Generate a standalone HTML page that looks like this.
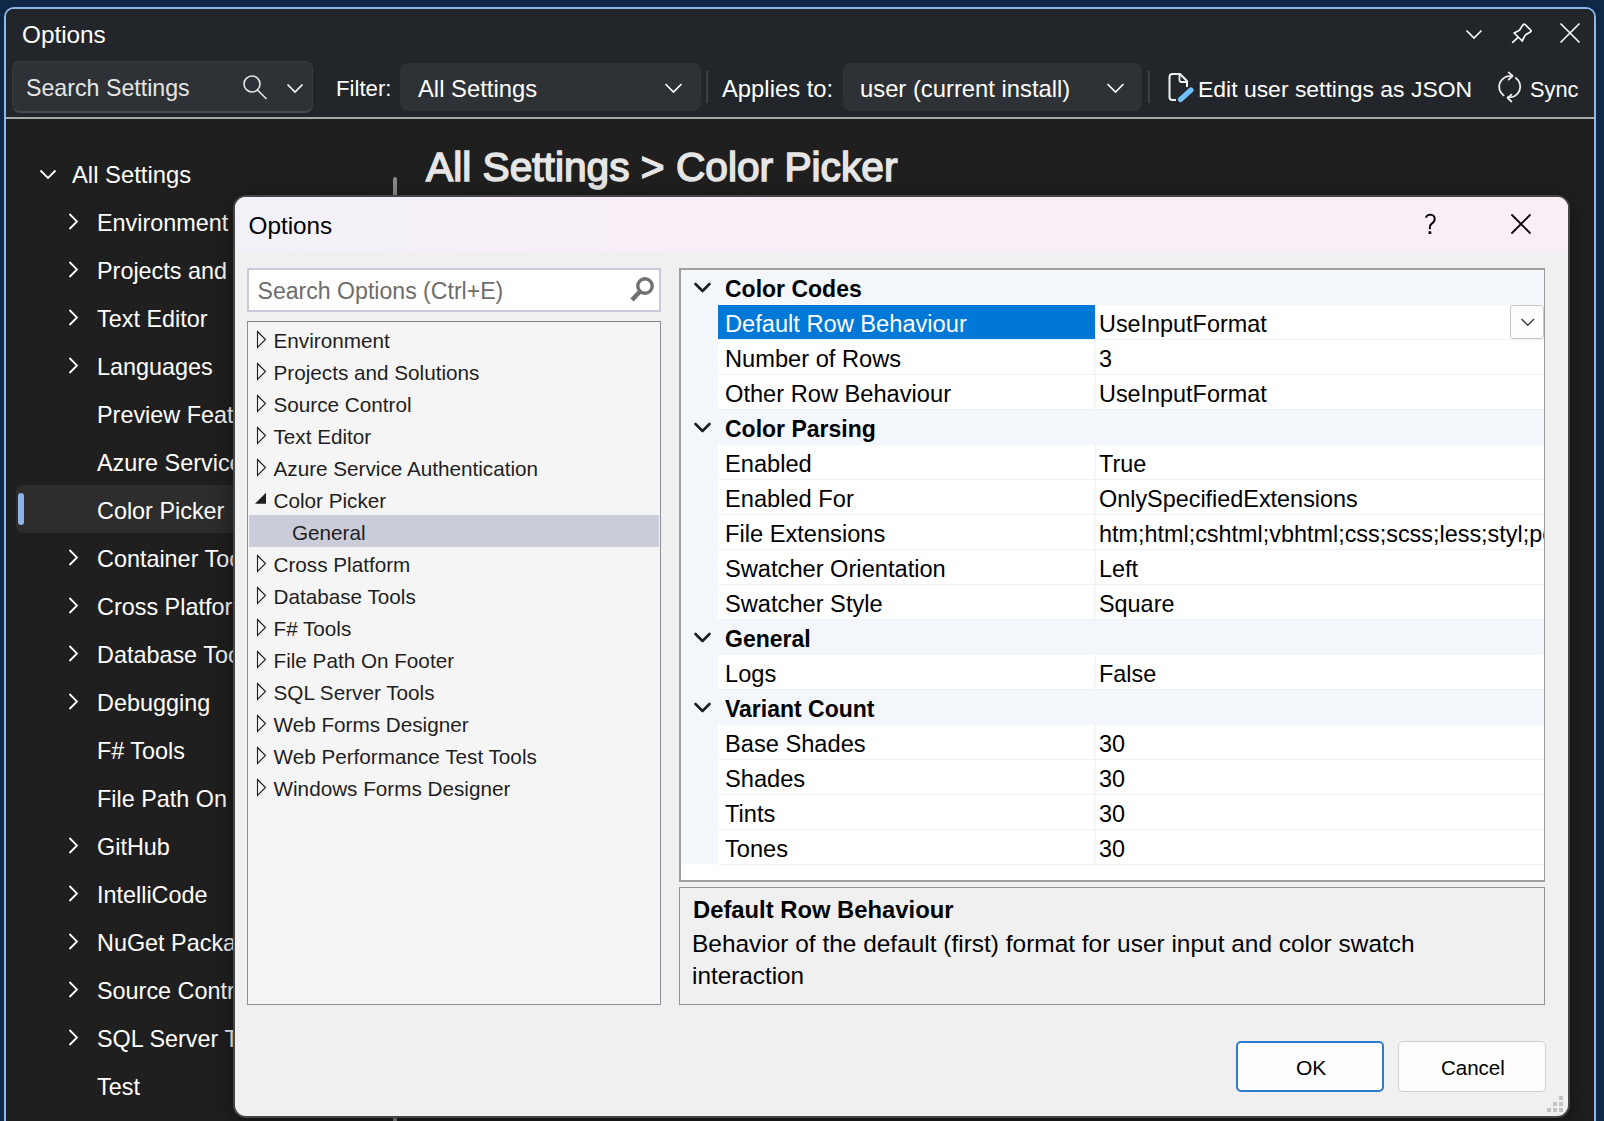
<!DOCTYPE html><html><head><meta charset='utf-8'><style>
html,body{margin:0;padding:0;}
body{width:1604px;height:1121px;overflow:hidden;position:relative;background:#0f2847;font-family:"Liberation Sans",sans-serif;}
.t{position:absolute;white-space:nowrap;}
.r{position:absolute;box-sizing:border-box;}
svg{position:absolute;overflow:visible;}
</style></head><body>
<div class='r' style='left:4px;top:7px;width:1592px;height:1133px;background:#1f1f1f;border:2px solid #8db9ed;border-radius:10px;'></div>
<div class='r' style='left:6px;top:9px;width:1588px;height:108px;background:#22262a;border-radius:8px 8px 0 0;'></div>
<div class='r' style='left:6px;top:117px;width:1588px;height:2px;background:#a9a9a9;'></div>
<div class='t' style='left:22px;top:23.23px;font-size:24.3px;line-height:24.3px;color:#ffffff;'>Options</div>
<svg style='left:0;top:0' width='1604' height='60'><polyline points='1466.5,30.5 1474,38 1481.5,30.5' fill='none' stroke='#fff' stroke-width='1.6'/><line x1='1560.5' y1='23.5' x2='1579.5' y2='42.5' stroke='#fff' stroke-width='1.6'/><line x1='1579.5' y1='23.5' x2='1560.5' y2='42.5' stroke='#fff' stroke-width='1.6'/><path d='M1523.2,24.6 Q1524.2,23.7 1525.2,24.6 L1530.6,30 Q1531.6,31.2 1530.4,32 L1526,34.6 Q1524.9,35.3 1524.5,36.4 L1522.2,41 L1514.1,33 L1518.6,30.8 Q1519.7,30.3 1520.1,29.2 Z' fill='none' stroke='#fff' stroke-width='1.7' stroke-linejoin='round'/><line x1='1517.8' y1='37.6' x2='1512.6' y2='42.3' stroke='#fff' stroke-width='1.7' stroke-linecap='round'/></svg>
<div class='r' style='left:12px;top:61px;width:301px;height:52px;background:#2e3236;border:1px solid #383b40;border-bottom:2px solid #46494e;border-radius:8px;'></div>
<div class='t' style='left:26px;top:77.36px;font-size:23.2px;line-height:23.2px;color:#e6e6e6;'>Search Settings</div>
<div class='t' style='left:336px;top:78.20px;font-size:22.2px;line-height:22.2px;color:#ffffff;'>Filter:</div>
<div class='r' style='left:400px;top:63px;width:301px;height:48px;background:#2e3236;border-radius:8px;'></div>
<div class='t' style='left:418px;top:76.85px;font-size:23.8px;line-height:23.8px;color:#ffffff;'>All Settings</div>
<div class='t' style='left:722px;top:76.85px;font-size:23.8px;line-height:23.8px;color:#ffffff;'>Applies to:</div>
<div class='r' style='left:843px;top:63px;width:299px;height:48px;background:#2e3236;border-radius:8px;'></div>
<div class='t' style='left:860px;top:76.85px;font-size:23.8px;line-height:23.8px;color:#ffffff;'>user (current install)</div>
<div class='t' style='left:1198px;top:77.57px;font-size:22.95px;line-height:22.95px;color:#ffffff;'>Edit user settings as JSON</div>
<div class='t' style='left:1530px;top:78.54px;font-size:21.8px;line-height:21.8px;color:#ffffff;'>Sync</div>
<svg style='left:0;top:0' width='1604' height='120'><circle cx='252' cy='84' r='8' fill='none' stroke='#e6e6e6' stroke-width='1.6'/><line x1='257.5' y1='90' x2='266.5' y2='99' stroke='#e6e6e6' stroke-width='1.6'/><polyline points='287.5,84.5 295,92 302.5,84.5' fill='none' stroke='#fff' stroke-width='1.6'/><polyline points='665.5,84 673.5,92 681.5,84' fill='none' stroke='#fff' stroke-width='1.6'/><polyline points='1107.5,84 1115.5,92 1123.5,84' fill='none' stroke='#fff' stroke-width='1.6'/><line x1='707' y1='71' x2='707' y2='103' stroke='#3d4045' stroke-width='2'/><line x1='1149' y1='71' x2='1149' y2='103' stroke='#3d4045' stroke-width='2'/><path d='M1176,100 L1172.5,100 Q1169.5,100 1169.5,97 L1169.5,77 Q1169.5,74 1172.5,74 L1180,74 L1187,81 L1187,87' fill='none' stroke='#f0f0f0' stroke-width='2' stroke-linejoin='round'/><path d='M1179.5,74.5 L1179.5,80 Q1179.5,82 1181.5,82 L1187,82' fill='none' stroke='#f0f0f0' stroke-width='1.8'/><line x1='1180.5' y1='99.5' x2='1191' y2='90' stroke='#22262a' stroke-width='8.5' stroke-linecap='round'/><line x1='1180.5' y1='99.5' x2='1191' y2='90' stroke='#70c0fb' stroke-width='5.2' stroke-linecap='round'/><path d='M1511.5,76.3 A10.6,10.6 0 0 0 1503.6,95.4' fill='none' stroke='#ececec' stroke-width='1.8' stroke-linecap='round'/><path d='M1515.8,78 A10.6,10.6 0 0 1 1507.9,97.1' fill='none' stroke='#ececec' stroke-width='1.8' stroke-linecap='round'/><polyline points='1508.6,72.4 1512.6,76 1508.6,79.6' fill='none' stroke='#ececec' stroke-width='1.8' stroke-linecap='round' stroke-linejoin='round'/><polyline points='1511.4,94.6 1507.6,98 1511.4,101.5' fill='none' stroke='#ececec' stroke-width='1.8' stroke-linecap='round' stroke-linejoin='round'/></svg>
<svg style='left:0;top:0' width='420' height='1121'><polyline points='40.5,170.5 48,178 55.5,170.5' fill='none' stroke='#fff' stroke-width='1.8'/><polyline points='69.5,214 77,221.5 69.5,229' fill='none' stroke='#fff' stroke-width='1.8'/><polyline points='69.5,262 77,269.5 69.5,277' fill='none' stroke='#fff' stroke-width='1.8'/><polyline points='69.5,310 77,317.5 69.5,325' fill='none' stroke='#fff' stroke-width='1.8'/><polyline points='69.5,358 77,365.5 69.5,373' fill='none' stroke='#fff' stroke-width='1.8'/><polyline points='69.5,550 77,557.5 69.5,565' fill='none' stroke='#fff' stroke-width='1.8'/><polyline points='69.5,598 77,605.5 69.5,613' fill='none' stroke='#fff' stroke-width='1.8'/><polyline points='69.5,646 77,653.5 69.5,661' fill='none' stroke='#fff' stroke-width='1.8'/><polyline points='69.5,694 77,701.5 69.5,709' fill='none' stroke='#fff' stroke-width='1.8'/><polyline points='69.5,838 77,845.5 69.5,853' fill='none' stroke='#fff' stroke-width='1.8'/><polyline points='69.5,886 77,893.5 69.5,901' fill='none' stroke='#fff' stroke-width='1.8'/><polyline points='69.5,934 77,941.5 69.5,949' fill='none' stroke='#fff' stroke-width='1.8'/><polyline points='69.5,982 77,989.5 69.5,997' fill='none' stroke='#fff' stroke-width='1.8'/><polyline points='69.5,1030 77,1037.5 69.5,1045' fill='none' stroke='#fff' stroke-width='1.8'/></svg>
<div class='r' style='left:16px;top:485px;width:384px;height:48px;background:#2d2d2d;border-radius:7px;'></div>
<div class='r' style='left:18px;top:493px;width:6px;height:32px;background:#8ab5ea;border-radius:3px;'></div>
<div class='t' style='left:72px;top:162.85px;font-size:23.8px;line-height:23.8px;color:#ffffff;'>All Settings</div>
<div class='t' style='left:97px;top:212.19px;font-size:23.4px;line-height:23.4px;color:#ffffff;'>Environment</div>
<div class='t' style='left:97px;top:260.19px;font-size:23.4px;line-height:23.4px;color:#ffffff;'>Projects and Solutions</div>
<div class='t' style='left:97px;top:308.19px;font-size:23.4px;line-height:23.4px;color:#ffffff;'>Text Editor</div>
<div class='t' style='left:97px;top:356.19px;font-size:23.4px;line-height:23.4px;color:#ffffff;'>Languages</div>
<div class='t' style='left:97px;top:404.19px;font-size:23.4px;line-height:23.4px;color:#ffffff;'>Preview Features</div>
<div class='t' style='left:97px;top:452.19px;font-size:23.4px;line-height:23.4px;color:#ffffff;'>Azure Service Authentication</div>
<div class='t' style='left:97px;top:500.19px;font-size:23.4px;line-height:23.4px;color:#ffffff;'>Color Picker</div>
<div class='t' style='left:97px;top:548.19px;font-size:23.4px;line-height:23.4px;color:#ffffff;'>Container Tools</div>
<div class='t' style='left:97px;top:596.19px;font-size:23.4px;line-height:23.4px;color:#ffffff;'>Cross Platform</div>
<div class='t' style='left:97px;top:644.19px;font-size:23.4px;line-height:23.4px;color:#ffffff;'>Database Tools</div>
<div class='t' style='left:97px;top:692.19px;font-size:23.4px;line-height:23.4px;color:#ffffff;'>Debugging</div>
<div class='t' style='left:97px;top:740.19px;font-size:23.4px;line-height:23.4px;color:#ffffff;'>F# Tools</div>
<div class='t' style='left:97px;top:788.19px;font-size:23.4px;line-height:23.4px;color:#ffffff;'>File Path On Footer</div>
<div class='t' style='left:97px;top:836.19px;font-size:23.4px;line-height:23.4px;color:#ffffff;'>GitHub</div>
<div class='t' style='left:97px;top:884.19px;font-size:23.4px;line-height:23.4px;color:#ffffff;'>IntelliCode</div>
<div class='t' style='left:97px;top:932.19px;font-size:23.4px;line-height:23.4px;color:#ffffff;'>NuGet Package Manager</div>
<div class='t' style='left:97px;top:980.19px;font-size:23.4px;line-height:23.4px;color:#ffffff;'>Source Control</div>
<div class='t' style='left:97px;top:1028.19px;font-size:23.4px;line-height:23.4px;color:#ffffff;'>SQL Server Tools</div>
<div class='t' style='left:97px;top:1076.19px;font-size:23.4px;line-height:23.4px;color:#ffffff;'>Test</div>
<div class='r' style='left:393px;top:177px;width:4px;height:963px;background:#8a8a8a;border-radius:2px;'></div>
<div class='t' style='left:426px;top:146.74px;font-size:40.7px;line-height:40.7px;color:#e6e6e6;-webkit-text-stroke:1.5px #e6e6e6;'>All Settings &gt; Color Picker</div>
<div class='r' style='left:233px;top:195px;width:1337px;height:923px;background:#f0f0f0;border:2px solid #454545;border-radius:13px;box-shadow:0 6px 24px rgba(0,0,0,0.45);overflow:hidden;'></div>
<div class='r' style='left:235px;top:197px;width:1333px;height:56px;background:linear-gradient(90deg,#f2f1f8 0%,#f6eff7 22%,#f9edf6 42%,#f9edf6 100%);border-radius:11px 11px 0 0;'></div>
<div class='t' style='left:248.5px;top:213.93px;font-size:24.3px;line-height:24.3px;color:#000000;'>Options</div>
<svg style='left:0;top:0' width='1604' height='1121'><path d='M1425.8,217.6 Q1427,214.6 1430.3,214.6 Q1434.7,214.8 1434.7,219 Q1434.7,221.8 1431.8,223.6 Q1429.9,224.9 1429.9,227 L1429.9,229.2' fill='none' stroke='#000' stroke-width='1.9'/><rect x='1428.5' y='231.2' width='2.8' height='2.8' rx='0.6' fill='#000'/><line x1='1511.5' y1='214.5' x2='1530.5' y2='233.5' stroke='#000' stroke-width='1.8'/><line x1='1530.5' y1='214.5' x2='1511.5' y2='233.5' stroke='#000' stroke-width='1.8'/></svg>
<div class='r' style='left:247px;top:268px;width:414px;height:44px;background:#ffffff;border:2px solid #c7cad8;'></div>
<div class='t' style='left:257.5px;top:280.44px;font-size:23.1px;line-height:23.1px;color:#6d6d6d;'>Search Options (Ctrl+E)</div>
<svg style='left:0;top:0' width='1604' height='1121'><circle cx='645' cy='286' r='7.2' fill='none' stroke='#707070' stroke-width='3.4'/><line x1='641' y1='290.5' x2='632' y2='300' stroke='#707070' stroke-width='4.6'/></svg>
<div class='r' style='left:247px;top:321px;width:414px;height:684px;background:#f5f5f5;border:1px solid #8b8f99;border-top-color:#7e838d;'></div>
<div class='r' style='left:249px;top:515px;width:410px;height:32px;background:#cbccd9;'></div>
<div class='t' style='left:273.5px;top:331.47px;font-size:20.7px;line-height:20.7px;color:#1e1e1e;'>Environment</div>
<div class='t' style='left:273.5px;top:363.47px;font-size:20.7px;line-height:20.7px;color:#1e1e1e;'>Projects and Solutions</div>
<div class='t' style='left:273.5px;top:395.47px;font-size:20.7px;line-height:20.7px;color:#1e1e1e;'>Source Control</div>
<div class='t' style='left:273.5px;top:427.47px;font-size:20.7px;line-height:20.7px;color:#1e1e1e;'>Text Editor</div>
<div class='t' style='left:273.5px;top:459.47px;font-size:20.7px;line-height:20.7px;color:#1e1e1e;'>Azure Service Authentication</div>
<div class='t' style='left:273.5px;top:491.47px;font-size:20.7px;line-height:20.7px;color:#1e1e1e;'>Color Picker</div>
<div class='t' style='left:292px;top:523.47px;font-size:20.7px;line-height:20.7px;color:#1e1e1e;'>General</div>
<div class='t' style='left:273.5px;top:555.47px;font-size:20.7px;line-height:20.7px;color:#1e1e1e;'>Cross Platform</div>
<div class='t' style='left:273.5px;top:587.47px;font-size:20.7px;line-height:20.7px;color:#1e1e1e;'>Database Tools</div>
<div class='t' style='left:273.5px;top:619.47px;font-size:20.7px;line-height:20.7px;color:#1e1e1e;'>F# Tools</div>
<div class='t' style='left:273.5px;top:651.47px;font-size:20.7px;line-height:20.7px;color:#1e1e1e;'>File Path On Footer</div>
<div class='t' style='left:273.5px;top:683.47px;font-size:20.7px;line-height:20.7px;color:#1e1e1e;'>SQL Server Tools</div>
<div class='t' style='left:273.5px;top:715.47px;font-size:20.7px;line-height:20.7px;color:#1e1e1e;'>Web Forms Designer</div>
<div class='t' style='left:273.5px;top:747.47px;font-size:20.7px;line-height:20.7px;color:#1e1e1e;'>Web Performance Test Tools</div>
<div class='t' style='left:273.5px;top:779.47px;font-size:20.7px;line-height:20.7px;color:#1e1e1e;'>Windows Forms Designer</div>
<svg style='left:0;top:0' width='1604' height='1121'><path d='M257.5,331.5 L265.5,339.5 L257.5,347.5 Z' fill='none' stroke='#1e1e1e' stroke-width='1.1'/><path d='M257.5,363.5 L265.5,371.5 L257.5,379.5 Z' fill='none' stroke='#1e1e1e' stroke-width='1.1'/><path d='M257.5,395.5 L265.5,403.5 L257.5,411.5 Z' fill='none' stroke='#1e1e1e' stroke-width='1.1'/><path d='M257.5,427.5 L265.5,435.5 L257.5,443.5 Z' fill='none' stroke='#1e1e1e' stroke-width='1.1'/><path d='M257.5,459.5 L265.5,467.5 L257.5,475.5 Z' fill='none' stroke='#1e1e1e' stroke-width='1.1'/><path d='M266,492.7 L266,503.7 L255,503.7 Z' fill='#1e1e1e'/><path d='M257.5,555.5 L265.5,563.5 L257.5,571.5 Z' fill='none' stroke='#1e1e1e' stroke-width='1.1'/><path d='M257.5,587.5 L265.5,595.5 L257.5,603.5 Z' fill='none' stroke='#1e1e1e' stroke-width='1.1'/><path d='M257.5,619.5 L265.5,627.5 L257.5,635.5 Z' fill='none' stroke='#1e1e1e' stroke-width='1.1'/><path d='M257.5,651.5 L265.5,659.5 L257.5,667.5 Z' fill='none' stroke='#1e1e1e' stroke-width='1.1'/><path d='M257.5,683.5 L265.5,691.5 L257.5,699.5 Z' fill='none' stroke='#1e1e1e' stroke-width='1.1'/><path d='M257.5,715.5 L265.5,723.5 L257.5,731.5 Z' fill='none' stroke='#1e1e1e' stroke-width='1.1'/><path d='M257.5,747.5 L265.5,755.5 L257.5,763.5 Z' fill='none' stroke='#1e1e1e' stroke-width='1.1'/><path d='M257.5,779.5 L265.5,787.5 L257.5,795.5 Z' fill='none' stroke='#1e1e1e' stroke-width='1.1'/></svg>
<div class='r' style='left:679px;top:268px;width:866px;height:614px;background:#ffffff;border:2px solid #a0a0a0;border-right:1px solid #9a9a9a;'></div>
<div class='r' style='left:681px;top:270px;width:37px;height:594px;background:#f3f6fb;'></div>
<div class='r' style='left:681px;top:270px;width:863px;height:35px;background:#f3f6fb;'></div>
<div class='t' style='left:725px;top:277.53px;font-size:23.0px;line-height:23.0px;color:#000000;font-weight:700;'>Color Codes</div>
<div class='r' style='left:1094px;top:305px;width:2px;height:34px;background:#f3f6fb;'></div>
<div class='r' style='left:718px;top:339px;width:826px;height:1px;background:#eef1f6;'></div>
<div class='r' style='left:718px;top:305px;width:377px;height:34px;background:#0078d7;'></div>
<div class='t' style='left:725px;top:312.68px;font-size:23.65px;line-height:23.65px;color:#ffffff;'>Default Row Behaviour</div>
<div class='t' style='left:1096px;top:305px;width:448px;height:34px;overflow:hidden'><div class='t' style='left:3px;top:8.19px;font-size:23.4px;line-height:23.4px;color:#000000;'>UseInputFormat</div>
</div>
<div class='r' style='left:1094px;top:340px;width:2px;height:34px;background:#f3f6fb;'></div>
<div class='r' style='left:718px;top:374px;width:826px;height:1px;background:#eef1f6;'></div>
<div class='t' style='left:725px;top:347.68px;font-size:23.65px;line-height:23.65px;color:#000000;'>Number of Rows</div>
<div class='t' style='left:1096px;top:340px;width:448px;height:34px;overflow:hidden'><div class='t' style='left:3px;top:8.19px;font-size:23.4px;line-height:23.4px;color:#000000;'>3</div>
</div>
<div class='r' style='left:1094px;top:375px;width:2px;height:34px;background:#f3f6fb;'></div>
<div class='r' style='left:718px;top:409px;width:826px;height:1px;background:#eef1f6;'></div>
<div class='t' style='left:725px;top:382.68px;font-size:23.65px;line-height:23.65px;color:#000000;'>Other Row Behaviour</div>
<div class='t' style='left:1096px;top:375px;width:448px;height:34px;overflow:hidden'><div class='t' style='left:3px;top:8.19px;font-size:23.4px;line-height:23.4px;color:#000000;'>UseInputFormat</div>
</div>
<div class='r' style='left:681px;top:410px;width:863px;height:35px;background:#f3f6fb;'></div>
<div class='t' style='left:725px;top:417.53px;font-size:23.0px;line-height:23.0px;color:#000000;font-weight:700;'>Color Parsing</div>
<div class='r' style='left:1094px;top:445px;width:2px;height:34px;background:#f3f6fb;'></div>
<div class='r' style='left:718px;top:479px;width:826px;height:1px;background:#eef1f6;'></div>
<div class='t' style='left:725px;top:452.68px;font-size:23.65px;line-height:23.65px;color:#000000;'>Enabled</div>
<div class='t' style='left:1096px;top:445px;width:448px;height:34px;overflow:hidden'><div class='t' style='left:3px;top:8.19px;font-size:23.4px;line-height:23.4px;color:#000000;'>True</div>
</div>
<div class='r' style='left:1094px;top:480px;width:2px;height:34px;background:#f3f6fb;'></div>
<div class='r' style='left:718px;top:514px;width:826px;height:1px;background:#eef1f6;'></div>
<div class='t' style='left:725px;top:487.68px;font-size:23.65px;line-height:23.65px;color:#000000;'>Enabled For</div>
<div class='t' style='left:1096px;top:480px;width:448px;height:34px;overflow:hidden'><div class='t' style='left:3px;top:8.19px;font-size:23.4px;line-height:23.4px;color:#000000;'>OnlySpecifiedExtensions</div>
</div>
<div class='r' style='left:1094px;top:515px;width:2px;height:34px;background:#f3f6fb;'></div>
<div class='r' style='left:718px;top:549px;width:826px;height:1px;background:#eef1f6;'></div>
<div class='t' style='left:725px;top:522.68px;font-size:23.65px;line-height:23.65px;color:#000000;'>File Extensions</div>
<div class='t' style='left:1096px;top:515px;width:448px;height:34px;overflow:hidden'><div class='t' style='left:3px;top:8.19px;font-size:23.4px;line-height:23.4px;color:#000000;'>htm;html;cshtml;vbhtml;css;scss;less;styl;pcss;sss;js;ts;jsx;tsx</div>
</div>
<div class='r' style='left:1094px;top:550px;width:2px;height:34px;background:#f3f6fb;'></div>
<div class='r' style='left:718px;top:584px;width:826px;height:1px;background:#eef1f6;'></div>
<div class='t' style='left:725px;top:557.68px;font-size:23.65px;line-height:23.65px;color:#000000;'>Swatcher Orientation</div>
<div class='t' style='left:1096px;top:550px;width:448px;height:34px;overflow:hidden'><div class='t' style='left:3px;top:8.19px;font-size:23.4px;line-height:23.4px;color:#000000;'>Left</div>
</div>
<div class='r' style='left:1094px;top:585px;width:2px;height:34px;background:#f3f6fb;'></div>
<div class='r' style='left:718px;top:619px;width:826px;height:1px;background:#eef1f6;'></div>
<div class='t' style='left:725px;top:592.68px;font-size:23.65px;line-height:23.65px;color:#000000;'>Swatcher Style</div>
<div class='t' style='left:1096px;top:585px;width:448px;height:34px;overflow:hidden'><div class='t' style='left:3px;top:8.19px;font-size:23.4px;line-height:23.4px;color:#000000;'>Square</div>
</div>
<div class='r' style='left:681px;top:620px;width:863px;height:35px;background:#f3f6fb;'></div>
<div class='t' style='left:725px;top:627.53px;font-size:23.0px;line-height:23.0px;color:#000000;font-weight:700;'>General</div>
<div class='r' style='left:1094px;top:655px;width:2px;height:34px;background:#f3f6fb;'></div>
<div class='r' style='left:718px;top:689px;width:826px;height:1px;background:#eef1f6;'></div>
<div class='t' style='left:725px;top:662.68px;font-size:23.65px;line-height:23.65px;color:#000000;'>Logs</div>
<div class='t' style='left:1096px;top:655px;width:448px;height:34px;overflow:hidden'><div class='t' style='left:3px;top:8.19px;font-size:23.4px;line-height:23.4px;color:#000000;'>False</div>
</div>
<div class='r' style='left:681px;top:690px;width:863px;height:35px;background:#f3f6fb;'></div>
<div class='t' style='left:725px;top:697.53px;font-size:23.0px;line-height:23.0px;color:#000000;font-weight:700;'>Variant Count</div>
<div class='r' style='left:1094px;top:725px;width:2px;height:34px;background:#f3f6fb;'></div>
<div class='r' style='left:718px;top:759px;width:826px;height:1px;background:#eef1f6;'></div>
<div class='t' style='left:725px;top:732.68px;font-size:23.65px;line-height:23.65px;color:#000000;'>Base Shades</div>
<div class='t' style='left:1096px;top:725px;width:448px;height:34px;overflow:hidden'><div class='t' style='left:3px;top:8.19px;font-size:23.4px;line-height:23.4px;color:#000000;'>30</div>
</div>
<div class='r' style='left:1094px;top:760px;width:2px;height:34px;background:#f3f6fb;'></div>
<div class='r' style='left:718px;top:794px;width:826px;height:1px;background:#eef1f6;'></div>
<div class='t' style='left:725px;top:767.68px;font-size:23.65px;line-height:23.65px;color:#000000;'>Shades</div>
<div class='t' style='left:1096px;top:760px;width:448px;height:34px;overflow:hidden'><div class='t' style='left:3px;top:8.19px;font-size:23.4px;line-height:23.4px;color:#000000;'>30</div>
</div>
<div class='r' style='left:1094px;top:795px;width:2px;height:34px;background:#f3f6fb;'></div>
<div class='r' style='left:718px;top:829px;width:826px;height:1px;background:#eef1f6;'></div>
<div class='t' style='left:725px;top:802.68px;font-size:23.65px;line-height:23.65px;color:#000000;'>Tints</div>
<div class='t' style='left:1096px;top:795px;width:448px;height:34px;overflow:hidden'><div class='t' style='left:3px;top:8.19px;font-size:23.4px;line-height:23.4px;color:#000000;'>30</div>
</div>
<div class='r' style='left:1094px;top:830px;width:2px;height:34px;background:#f3f6fb;'></div>
<div class='r' style='left:718px;top:864px;width:826px;height:1px;background:#eef1f6;'></div>
<div class='t' style='left:725px;top:837.68px;font-size:23.65px;line-height:23.65px;color:#000000;'>Tones</div>
<div class='t' style='left:1096px;top:830px;width:448px;height:34px;overflow:hidden'><div class='t' style='left:3px;top:8.19px;font-size:23.4px;line-height:23.4px;color:#000000;'>30</div>
</div>
<svg style='left:0;top:0' width='1604' height='1121'><polyline points='695.5,284 702.5,291 709.5,284' fill='none' stroke='#1e1e1e' stroke-width='2.6' stroke-linecap='round' stroke-linejoin='round'/><polyline points='695.5,424 702.5,431 709.5,424' fill='none' stroke='#1e1e1e' stroke-width='2.6' stroke-linecap='round' stroke-linejoin='round'/><polyline points='695.5,634 702.5,641 709.5,634' fill='none' stroke='#1e1e1e' stroke-width='2.6' stroke-linecap='round' stroke-linejoin='round'/><polyline points='695.5,704 702.5,711 709.5,704' fill='none' stroke='#1e1e1e' stroke-width='2.6' stroke-linecap='round' stroke-linejoin='round'/></svg>
<div class='r' style='left:1510px;top:305px;width:34px;height:34px;background:#fdfdfd;border:1px solid #c9c9c9;border-radius:3px;'></div>
<svg style='left:0;top:0' width='1604' height='1121'><polyline points='1521.5,319 1527.8,325.3 1534,319' fill='none' stroke='#3a3a3a' stroke-width='1.3'/></svg>
<div class='r' style='left:679px;top:887px;width:866px;height:118px;background:#f0f0f0;border:1px solid #949494;'></div>
<div class='t' style='left:693px;top:898.45px;font-size:23.8px;line-height:23.8px;color:#000000;font-weight:700;'>Default Row Behaviour</div>
<div class='t' style='left:692px;top:932.30px;font-size:24.45px;line-height:24.45px;color:#000000;'>Behavior of the default (first) format for user input and color swatch</div>
<div class='t' style='left:692px;top:964.43px;font-size:24.3px;line-height:24.3px;color:#000000;'>interaction</div>
<div class='r' style='left:1236px;top:1041px;width:148px;height:51px;background:#fdfdfd;border:2px solid #2a7cd2;border-radius:5px;'></div>
<div class='t' style='left:1296px;top:1057.22px;font-size:21px;line-height:21px;color:#000000;'>OK</div>
<div class='r' style='left:1398px;top:1041px;width:148px;height:51px;background:#fdfdfd;border:1px solid #d0d0d0;border-radius:5px;'></div>
<div class='t' style='left:1441px;top:1057.64px;font-size:20.5px;line-height:20.5px;color:#000000;'>Cancel</div>
<svg style='left:0;top:0' width='1604' height='1121'><rect x='1559' y='1096' width='4' height='4' fill='#c3c3c3' shape-rendering='crispEdges'/><rect x='1553' y='1102' width='4' height='4' fill='#c3c3c3' shape-rendering='crispEdges'/><rect x='1559' y='1102' width='4' height='4' fill='#c3c3c3' shape-rendering='crispEdges'/><rect x='1547' y='1108' width='4' height='4' fill='#c3c3c3' shape-rendering='crispEdges'/><rect x='1553' y='1108' width='4' height='4' fill='#c3c3c3' shape-rendering='crispEdges'/><rect x='1559' y='1108' width='4' height='4' fill='#c3c3c3' shape-rendering='crispEdges'/></svg>
</body></html>
